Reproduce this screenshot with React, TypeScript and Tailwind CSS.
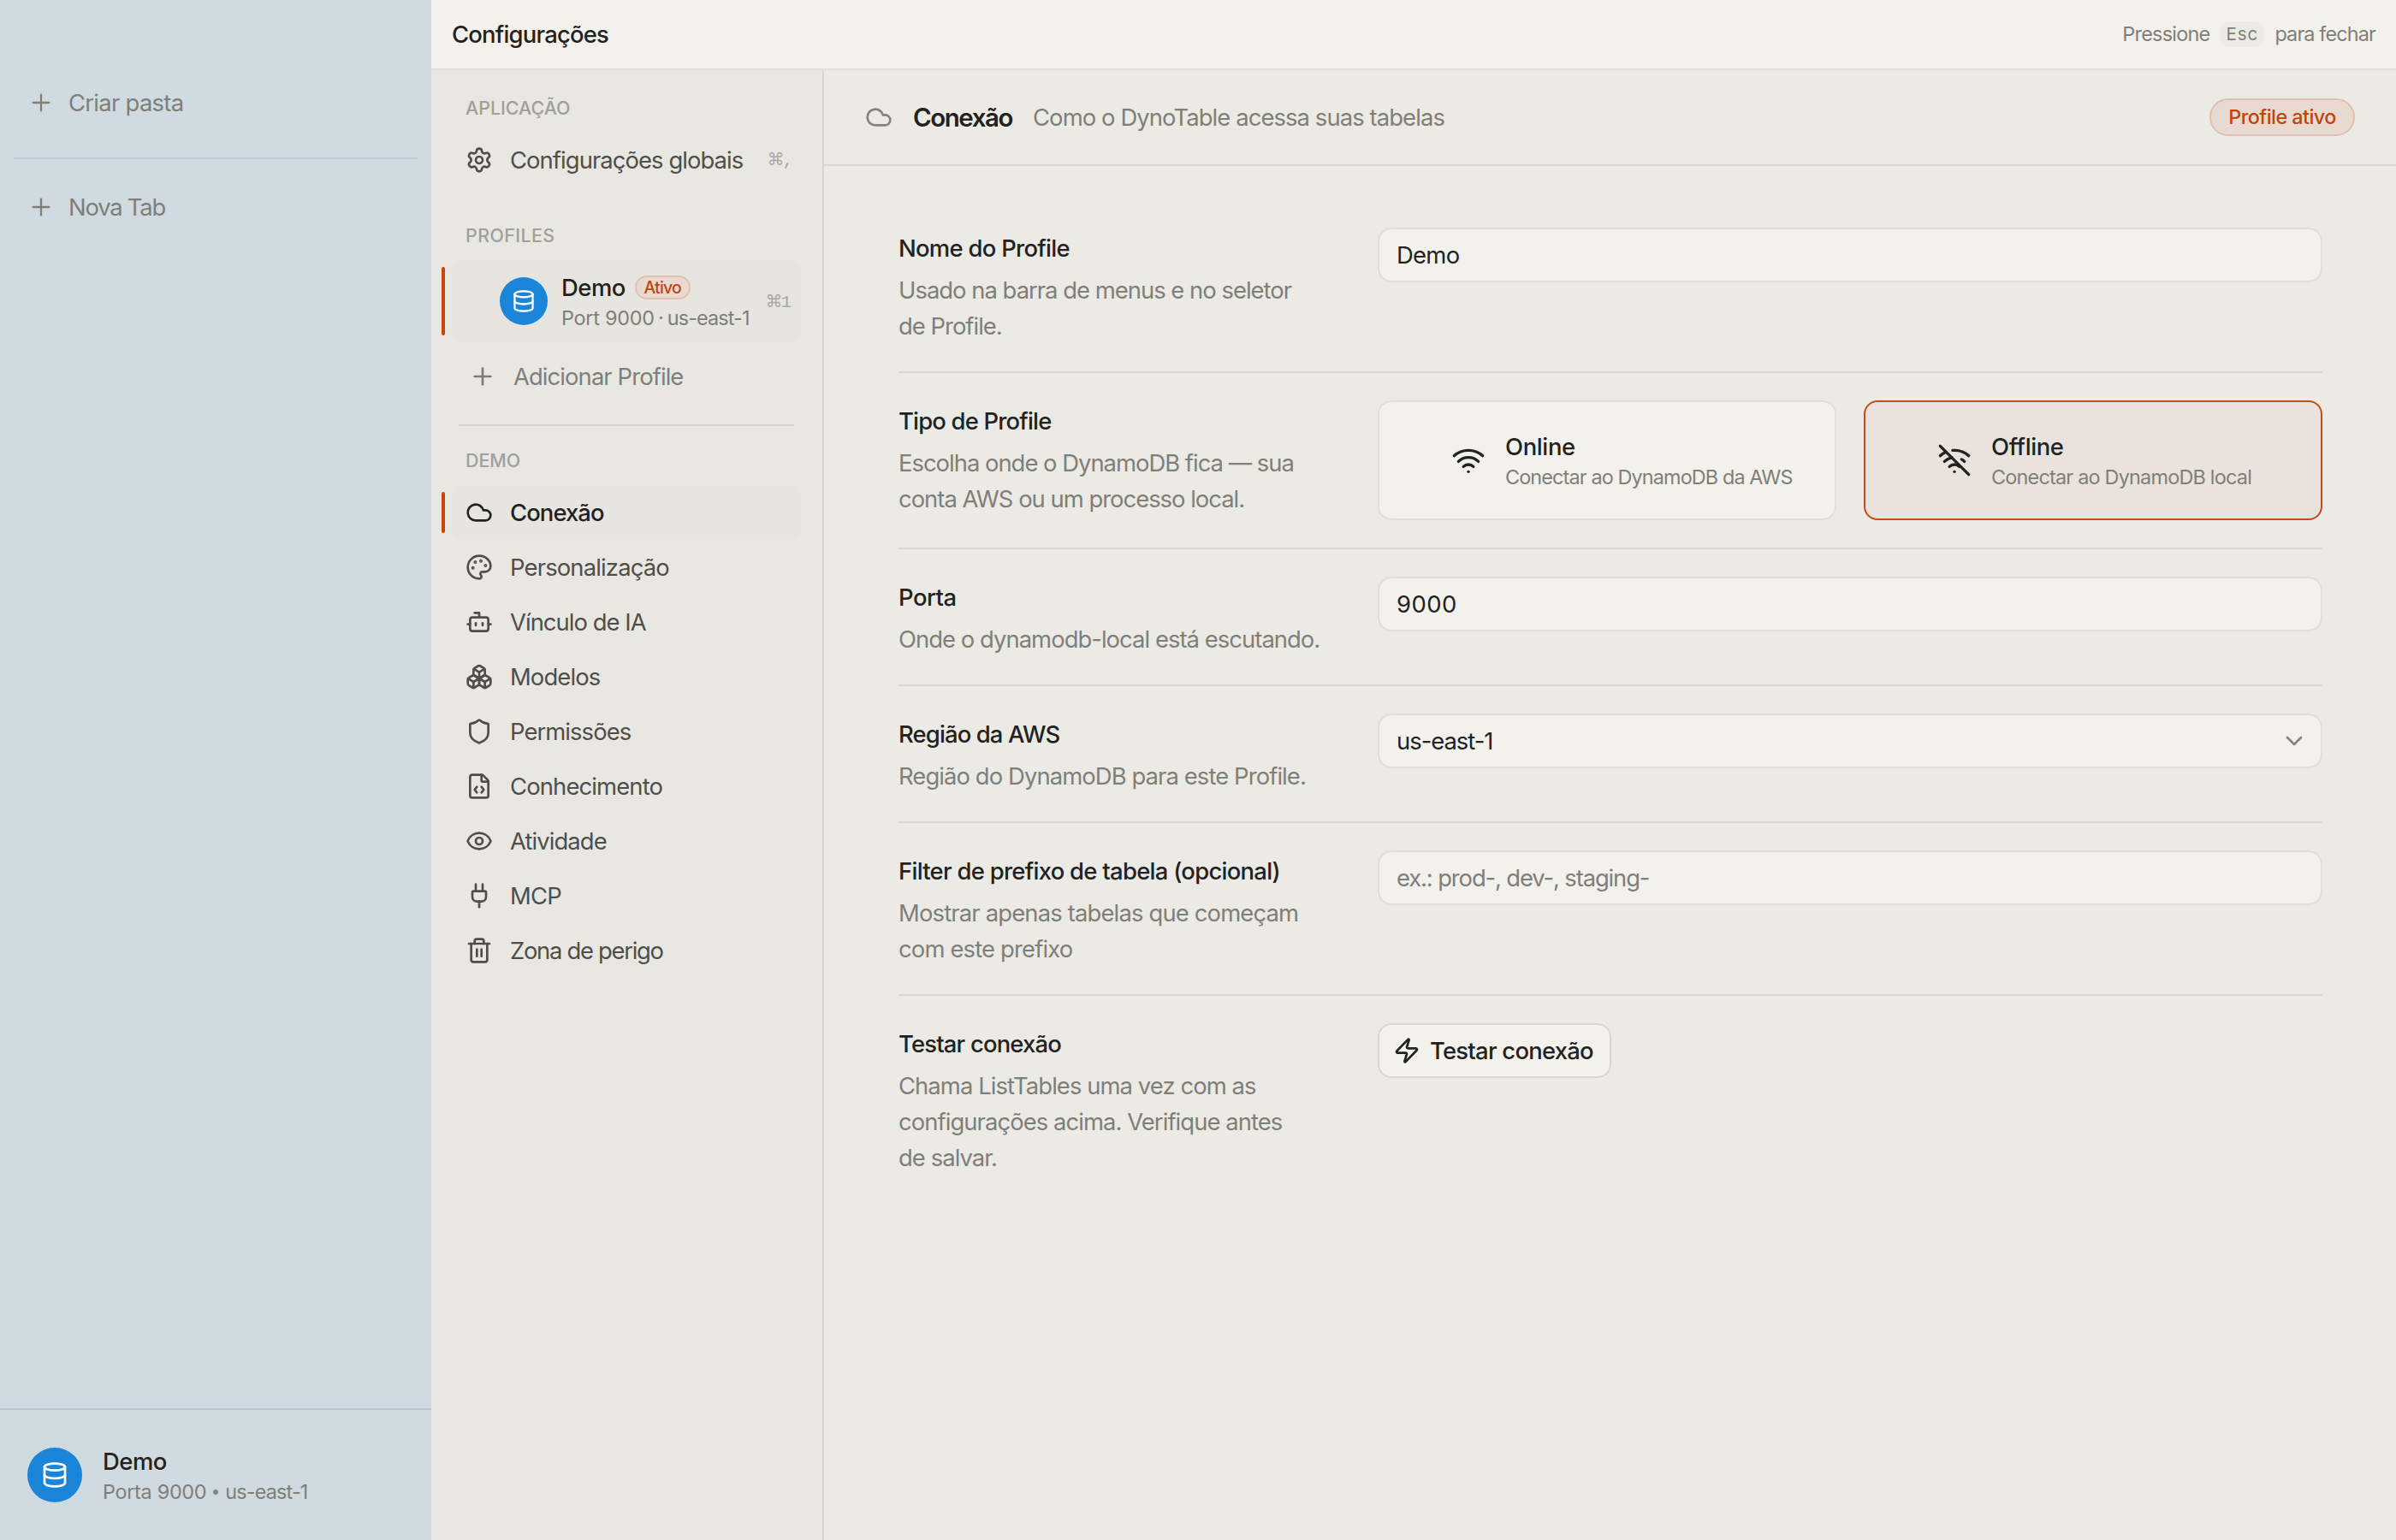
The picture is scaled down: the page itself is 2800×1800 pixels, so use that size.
import type { ReactNode } from 'react';
import {
  Bot,
  Boxes,
  ChevronDown,
  Cloud,
  Database,
  Eye,
  FileCode,
  Palette,
  Plug,
  Plus,
  Settings,
  Shield,
  Trash2,
  Wifi,
  WifiOff,
  Zap,
} from 'lucide-react';

const navItems = [
  { label: 'Conexão', icon: Cloud, active: true, tracking: 'tracking-[-0.9px]' },
  { label: 'Personalização', icon: Palette, tracking: 'tracking-[-0.83px]' },
  { label: 'Vínculo de IA', icon: Bot, tracking: 'tracking-[-0.95px]' },
  { label: 'Modelos', icon: Boxes, tracking: 'tracking-[-0.88px]' },
  { label: 'Permissões', icon: Shield, tracking: 'tracking-[-0.92px]' },
  { label: 'Conhecimento', icon: FileCode, tracking: 'tracking-[-0.85px]' },
  { label: 'Atividade', icon: Eye, tracking: 'tracking-[-0.9px]' },
  { label: 'MCP', icon: Plug, tracking: 'tracking-[-0.8px]' },
  { label: 'Zona de perigo', icon: Trash2, tracking: 'tracking-[-1.29px]' },
];

function SectionLabel({ children, className }: { children: ReactNode; className: string }) {
  return (
    <div className={`mb-[13px] h-8 pl-4 text-[21.4px] leading-8 font-medium text-[#a09f99] ${className}`}>
      {children}
    </div>
  );
}

function Shortcut({ symbol, className }: { symbol: string; className: string }) {
  return (
    <span className={`flex items-baseline tracking-normal text-[#aaa9a3] ${className}`}>
      <span className="font-['DejaVu_Sans',sans-serif] text-[20px] leading-6">⌘</span>
      <span className="-ml-0.5 font-['Liberation_Mono',monospace] text-[21px] leading-6">{symbol}</span>
    </span>
  );
}

function ActiveBar() {
  return <span className="absolute inset-y-2 -left-3 w-1 rounded-xs bg-[#ca4509]" />;
}

function Sidebar() {
  return (
    <aside className="flex w-[504px] shrink-0 flex-col bg-[#d0dae1] text-[#7f7f78]">
      <div className="mt-[88px] flex h-16 items-center gap-4 pl-8">
        <Plus size={32} strokeWidth={1.75} />
        <span className="pt-0.5 tracking-[-0.7px]">Criar pasta</span>
      </div>
      <div className="mx-4 mt-8 h-0.5 bg-[#bfc9d2]" />
      <div className="mt-6 flex h-16 items-center gap-4 pl-8">
        <Plus size={32} strokeWidth={1.75} />
        <span className="pt-0.5 tracking-[-1.2px]">Nova Tab</span>
      </div>
      <div className="mt-auto flex h-[154px] items-center gap-6 border-t-2 border-[#bcc8d1] pl-8">
        <div className="flex size-16 items-center justify-center rounded-full bg-[#1b86d9] text-white">
          <Database size={32} />
        </div>
        <div className="pt-[3px]">
          <div className="leading-9 font-medium tracking-[-0.49px] text-[#22221e]">Demo</div>
          <div className="flex items-center text-[23.4px] leading-9">
            <span className="tracking-[-0.3px]">Porta 9000</span>
            <span className="mx-2 size-1.5 rounded-full bg-[#84847d]" />
            <span className="tracking-[-0.83px]">us-east-1</span>
          </div>
        </div>
      </div>
    </aside>
  );
}

function SettingsNav() {
  return (
    <nav className="flex w-[459px] shrink-0 flex-col border-r-2 border-[#d5d4d0] bg-[#e8e7e2] pr-[25px] pl-6 text-[#4f4e49]">
      <SectionLabel className="mt-7 tracking-normal">APLICAÇÃO</SectionLabel>
      <div className="flex h-16 items-center gap-5 pl-4">
        <Settings size={32} />
        <span className="pt-0.5 tracking-[-0.92px]">Configurações globais</span>
        <Shortcut symbol="," className="ml-auto pr-[9px]" />
      </div>

      <SectionLabel className="mt-10 tracking-[0.41px]">PROFILES</SectionLabel>
      <div className="relative flex h-24 items-center rounded-xl bg-[#e6e5e0] pl-14">
        <ActiveBar />
        <div className="flex size-14 items-center justify-center rounded-full bg-[#1b86d9] text-white">
          <Database size={28} />
        </div>
        <div className="ml-4 pt-1">
          <div className="flex h-9 items-center">
            <span className="pt-0.5 font-medium tracking-[-0.49px] text-[#22221e]">Demo</span>
            <span className="ml-[11px] flex h-7 w-[65px] items-center justify-center rounded-full border-2 border-[#e6bfb3] bg-[#e9dad1] pt-px text-[19.4px] font-medium tracking-[-0.72px] text-[#c2450c]">
              Ativo
            </span>
          </div>
          <div className="flex text-[23.4px] leading-9 text-[#7f7f78]">
            <span className="tracking-[-0.25px]">Port 9000</span>
            <span className="w-[15px] text-center tracking-normal">·</span>
            <span className="tracking-[-0.88px]">us-east-1</span>
          </div>
        </div>
        <Shortcut symbol="1" className="ml-auto pt-0.5 pr-[11px]" />
      </div>
      <div className="mt-2 flex h-16 items-center gap-5 pl-5 text-[#7f7f78]">
        <Plus size={32} />
        <span className="pt-0.5 tracking-[-0.9px]">Adicionar Profile</span>
      </div>
      <div className="mx-2 mt-6 h-0.5 bg-[#d5d4d0]" />

      <SectionLabel className="mt-6 tracking-normal">DEMO</SectionLabel>
      {navItems.map(({ label, icon: Icon, active, tracking }) => (
        <div
          key={label}
          className={`relative flex h-16 items-center gap-5 rounded-xl pl-4 ${
            active ? 'bg-[#e6e5e0] font-medium text-[#22221e]' : ''
          }`}
        >
          {active && <ActiveBar />}
          <Icon size={32} />
          <span className={`pt-0.5 ${tracking}`}>{label}</span>
        </div>
      ))}
    </nav>
  );
}

function Row({
  title,
  titleTracking,
  lines,
  tracking,
  last,
  children,
}: {
  title: string;
  titleTracking: string;
  lines: string[];
  tracking: string;
  last?: boolean;
  children: ReactNode;
}) {
  return (
    <section
      className={`grid grid-cols-[1fr_1104px] items-start py-8 ${last ? '' : 'border-b-2 border-[#d8d7d2]'}`}
    >
      <div className="pt-1 whitespace-nowrap">
        <h2 className={`mb-2 h-10 leading-10 font-medium text-[#22221e] ${titleTracking}`}>{title}</h2>
        {lines.map((line) => (
          <p key={line} className={`leading-[42px] text-[#7f7f78] ${tracking}`}>
            {line}
          </p>
        ))}
      </div>
      {children}
    </section>
  );
}

function Field({ children }: { children: ReactNode }) {
  return (
    <div className="flex h-16 items-center justify-between rounded-2xl border-2 border-[#dfdeda] bg-[#f2f1ec] pr-[15px] pl-5">
      {children}
    </div>
  );
}

function TypeCard({
  icon,
  title,
  subtitle,
  selected,
}: {
  icon: ReactNode;
  title: string;
  subtitle: ReactNode;
  selected?: boolean;
}) {
  return (
    <div
      className={`flex h-[140px] items-center gap-[23px] rounded-2xl border-2 pl-[84px] ${
        selected ? 'border-[#c54c12] bg-[#eae2dc]' : 'border-[#dfdeda] bg-[#f2f1ec]'
      }`}
    >
      {icon}
      <div className="pt-1 whitespace-nowrap">
        <div className="leading-9 font-medium tracking-[-0.35px]">{title}</div>
        <div className="text-[23.4px] leading-9 text-[#7f7f78]">{subtitle}</div>
      </div>
    </div>
  );
}

function ConnectionPanel() {
  return (
    <main className="flex-1 bg-[#ebeae5]">
      <header className="flex h-28 items-center border-b-2 border-[#d8d7d2] px-12">
        <Cloud size={32} className="text-[#84847d]" />
        <h1 className="ml-6 pt-0.5 text-[29.4px] font-semibold tracking-[-1.39px]">Conexão</h1>
        <span className="ml-6 pt-0.5 tracking-[-0.9px] text-[#7f7f78]">Como o DynoTable acessa suas tabelas</span>
        <span className="ml-auto flex h-11 w-[170px] items-center justify-center rounded-full border-2 border-[#e0bfb3] bg-[#e9dad1] text-[23.4px] font-medium tracking-[-0.55px] text-[#c2450c]">
          Profile ativo
        </span>
      </header>
      <div className="pt-10 pr-[86px] pl-[87px]">
        <Row
          title="Nome do Profile"
          titleTracking="tracking-[-0.7px]"
          lines={['Usado na barra de menus e no seletor', 'de Profile.']}
          tracking="tracking-[-0.98px]"
        >
          <Field>
            <span className="pt-0.5 tracking-[-0.7px]">Demo</span>
          </Field>
        </Row>
        <Row
          title="Tipo de Profile"
          titleTracking="tracking-[-0.8px]"
          lines={['Escolha onde o DynamoDB fica — sua', 'conta AWS ou um processo local.']}
          tracking="tracking-[-0.99px]"
        >
          <div className="grid grid-cols-2 gap-8">
            <TypeCard
              icon={<Wifi size={40} />}
              title="Online"
              subtitle={<span className="tracking-[-0.87px]">Conectar ao DynamoDB da AWS</span>}
            />
            <TypeCard
              icon={<WifiOff size={40} />}
              title="Offline"
              subtitle={<span className="tracking-[-0.78px]">Conectar ao DynamoDB local</span>}
              selected
            />
          </div>
        </Row>
        <Row
          title="Porta"
          titleTracking="tracking-[-0.5px]"
          lines={['Onde o dynamodb-local está escutando.']}
          tracking="tracking-[-0.95px]"
        >
          <Field>
            <span className="pt-0.5 tracking-[0.5px]">9000</span>
          </Field>
        </Row>
        <Row
          title="Região da AWS"
          titleTracking="tracking-[-0.85px]"
          lines={['Região do DynamoDB para este Profile.']}
          tracking="tracking-[-0.9px]"
        >
          <Field>
            <span className="pt-0.5 tracking-[-1px]">us-east-1</span>
            <ChevronDown size={32} className="text-[#84847d]" />
          </Field>
        </Row>
        <Row
          title="Filter de prefixo de tabela (opcional)"
          titleTracking="tracking-[-0.7px]"
          lines={['Mostrar apenas tabelas que começam', 'com este prefixo']}
          tracking="tracking-[-0.83px]"
        >
          <Field>
            <span className="pt-0.5 tracking-[-1.12px] text-[#7f7f78]">ex.: prod-, dev-, staging-</span>
          </Field>
        </Row>
        <Row
          title="Testar conexão"
          titleTracking="tracking-[-0.8px]"
          lines={['Chama ListTables uma vez com as', 'configurações acima. Verifique antes', 'de salvar.']}
          tracking="tracking-[-0.92px]"
          last
        >
          <button className="flex h-16 w-[273px] items-center gap-[11px] rounded-2xl border-2 border-[#d8d7d2] bg-[#f2f1ec] pl-4 font-medium tracking-[-0.74px] whitespace-nowrap">
            <Zap size={32} />
            <span className="pt-0.5">Testar conexão</span>
          </button>
        </Row>
      </div>
    </main>
  );
}

export default function App() {
  return (
    <div className="flex h-[1800px] w-[2800px] overflow-hidden font-[Inter,sans-serif] text-[27.4px] text-[#22221e]">
      <Sidebar />
      <div className="flex flex-1 flex-col">
        <div className="flex h-[82px] shrink-0 items-center justify-between border-b-2 border-[#e0dfdb] bg-[#f2f1ec] px-6">
          <span className="pt-px font-medium tracking-[-0.78px]">Configurações</span>
          <div className="flex items-center gap-3 text-[23.4px] text-[#7f7f78]">
            <span className="tracking-[-0.75px]">Pressione</span>
            <span className="flex h-[30px] w-[52px] items-center justify-center rounded-xl bg-[#ebeae5] text-[20.5px] tracking-[0.9px]">
              Esc
            </span>
            <span className="tracking-[-0.85px]">para fechar</span>
          </div>
        </div>
        <div className="flex flex-1">
          <SettingsNav />
          <ConnectionPanel />
        </div>
      </div>
    </div>
  );
}
